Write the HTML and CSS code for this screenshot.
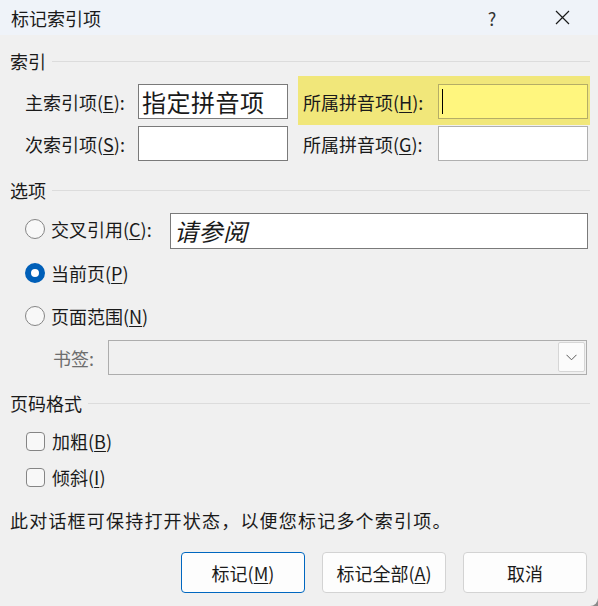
FILE: index.html
```html
<!DOCTYPE html>
<html lang="zh-CN">
<head>
  <meta charset="UTF-8">
  <title>标记索引项</title>
  <link rel="stylesheet" href="styles.css">
</head>
<body>
  <div class="window">
    <div class="titlebar">
      <span class="title">标记索引项</span>
      <span class="help">?</span>
      <span class="close">
        <svg width="15" height="15" viewBox="0 0 15 15"><path d="M1 1 L14 14 M14 1 L1 14" stroke="#1a1a1a" stroke-width="1.2" fill="none"/></svg>
      </span>
    </div>

    <div class="content">
      <div class="group-head"><span>索引</span><i></i></div>

      <div class="index-row first">
        <span class="lbl">主索引项(<u>E</u>):</span>
        <div class="field dark big">指定拼音项</div>
        <div class="pair hl">
          <span class="lbl wide">所属拼音项(<u>H</u>):</span>
          <div class="field yellow"><span class="caret"></span></div>
        </div>
      </div>

      <div class="index-row">
        <span class="lbl">次索引项(<u>S</u>):</span>
        <div class="field dark"></div>
        <div class="pair">
          <span class="lbl wide">所属拼音项(<u>G</u>):</span>
          <div class="field light"></div>
        </div>
      </div>

      <div class="group-head options-head"><span>选项</span><i></i></div>

      <div class="opt-row xref">
        <span class="choice"><span class="radio"></span>交叉引用(<u>C</u>):</span>
        <div class="field dark big italic">请参阅</div>
      </div>
      <div class="opt-row current">
        <span class="choice"><span class="radio on"></span>当前页(<u>P</u>)</span>
      </div>
      <div class="opt-row range">
        <span class="choice"><span class="radio"></span>页面范围(<u>N</u>)</span>
      </div>
      <div class="bookmark-row">
        <span class="muted">书签:</span>
        <div class="select">
          <span class="drop">
            <svg width="11" height="7" viewBox="0 0 11 7"><path d="M0.5 0.8 L5.5 5.8 L10.5 0.8" stroke="#5a5a5a" stroke-width="1" fill="none"/></svg>
          </span>
        </div>
      </div>

      <div class="group-head format-head"><span>页码格式</span><i></i></div>

      <div class="check-row bold-row">
        <span class="box"></span>加粗(<u>B</u>)
      </div>
      <div class="check-row italic-row">
        <span class="box"></span>倾斜(<u>I</u>)
      </div>

      <p class="note">此对话框可保持打开状态，以便您标记多个索引项。</p>

      <div class="buttons">
        <button class="primary">标记(<u>M</u>)</button>
        <button>标记全部(<u>A</u>)</button>
        <button>取消</button>
      </div>
    </div>
  </div>
</body>
</html>
```

FILE: styles.css
```css
html { background: #8a8a8a; }
body { margin: 0; font-family: "Noto Sans CJK SC", "Noto Sans", sans-serif; font-size: 18px; line-height: 24px; color: #1a1a1a; }
.window { width: 598px; height: 606px; background: #f0f0f0; border-bottom-right-radius: 8px; overflow: hidden; }
u { text-decoration-thickness: 1px; text-underline-offset: 2px; }

.titlebar { height: 35px; background: #eff3f9; display: flex; align-items: center; }
.title { margin-left: 11px; flex: 1; }
.help { width: 16px; text-align: center; margin-right: 55px; color: #333; }
.close { width: 15px; height: 15px; margin-right: 28px; display: flex; }

.content { padding: 0 8px 0 10px; }

.group-head { display: flex; align-items: center; height: 24px; margin-top: 14px; }
.group-head i { flex: 1; border-top: 1px solid #dcdcdc; margin-left: 6px; }
.options-head { margin-top: 17px; }
.format-head { margin-top: 16px; }

.index-row { display: flex; align-items: center; height: 35px; padding-left: 15px; margin-top: 7px; }
.index-row.first { margin-top: 11px; }
.lbl { width: 113px; white-space: nowrap; }
.lbl.wide { width: 135px; }
.pair { display: flex; align-items: center; margin-left: 10px; padding-left: 5px; }
.pair.hl { background: #f1e77a; margin-top: -8px; margin-bottom: -6px; padding: 8px 2px 6px 5px; }

.field { box-sizing: border-box; width: 150px; height: 35px; background: #fff; border: 1px solid #7a7a7a; padding-left: 3px; line-height: 33px; white-space: nowrap; overflow: hidden; }
.field.light { border-color: #b0b0b0; }
.field.yellow { background: #fff67e; border-color: #b5ad66; position: relative; }
.field.big { font-size: 24px; letter-spacing: 0.5px; }
.field.italic { font-style: italic; width: 418px; height: 36px; }
.caret { position: absolute; left: 3px; top: 4px; width: 1px; height: 25px; background: #000; }

.opt-row { display: flex; align-items: center; padding-left: 15px; }
.opt-row.xref { height: 36px; margin-top: 11px; }
.opt-row.xref .choice { width: 145px; padding-bottom: 5px; }
.opt-row.current { margin-top: 12px; }
.opt-row.range { margin-top: 19px; }
.choice { display: flex; align-items: center; white-space: nowrap; }

.radio { box-sizing: border-box; width: 20px; height: 20px; border-radius: 50%; border: 1px solid #858585; background: #f8f8f8; margin-right: 6px; }
.radio.on { border: 6px solid #005fb8; background: #fff; }

.bookmark-row { display: flex; align-items: center; margin-top: 12px; padding-left: 43px; }
.muted { width: 55px; color: #6d6d6d; }
.select { box-sizing: border-box; width: 479px; height: 35px; border: 1px solid #adadad; background: #f0f0f0; display: flex; justify-content: flex-end; padding: 1px 1px 2px 0; }
.drop { width: 25px; background: #fbfbfb; border: 1px solid #d6d6d6; border-radius: 2px; display: flex; align-items: center; justify-content: center; }

.check-row { display: flex; align-items: center; padding-left: 16px; margin-top: 14px; }
.check-row.italic-row { margin-top: 12px; }
.box { box-sizing: border-box; width: 19px; height: 19px; border: 1px solid #858585; border-radius: 4px; background: #f8f8f8; margin-right: 7px; }

.note { margin: 19px 0 0; letter-spacing: 1.2px; }

.buttons { display: flex; justify-content: flex-end; gap: 17px; margin-top: 20px; margin-right: 3px; }
button { box-sizing: border-box; width: 124px; height: 41px; font: inherit; color: #1a1a1a; background: #fdfdfd; border: 1px solid #d3d3d3; border-radius: 4px; padding: 0; }
button.primary { border-color: #0067c0; }
```
